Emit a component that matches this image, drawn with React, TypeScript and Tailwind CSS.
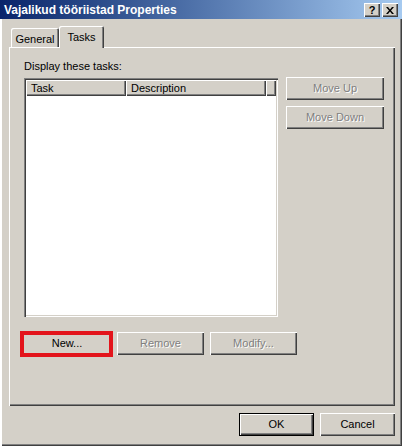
import React from 'react';

const raised =
    'shadow-[inset_1px_1px_0_#ffffff,inset_-1px_-1px_0_#404040,inset_-2px_-2px_0_#808080]';

function Btn({
    label,
    disabled = false,
    isDefault = false,
    className = '',
}: {
    label: string;
    disabled?: boolean;
    isDefault?: boolean;
    className?: string;
}) {
    const edge = isDefault
        ? 'shadow-[inset_0_0_0_1px_#000000,inset_2px_2px_0_#ffffff,inset_-2px_-2px_0_#404040,inset_-3px_-3px_0_#808080]'
        : raised;
    return (
        <div
            className={`flex h-[23px] items-center justify-center bg-[#d4d0c8] text-[11px] ${edge} ${
                disabled ? 'text-[#808080] [text-shadow:1px_1px_0_#ffffff]' : 'text-black'
            } ${className}`}
        >
            {label}
        </div>
    );
}

function CaptionBtn({ children }: { children: React.ReactNode }) {
    return (
        <div
            className={`flex h-[14px] w-[16px] items-center justify-center bg-[#d4d0c8] text-[11px] font-bold leading-none text-black ${raised}`}
        >
            {children}
        </div>
    );
}

export default function App() {
    return (
        <div
            className="relative flex h-[446px] w-[402px] flex-col bg-[#d4d0c8] shadow-[inset_2px_0_0_#ffffff,inset_-1px_-1px_0_#404040,inset_-2px_-2px_0_#808080]"
            style={{ fontFamily: '"Liberation Sans", Arial, sans-serif' }}
        >
            {/* title bar */}
            <div className="flex h-[19px] items-center bg-gradient-to-r from-[#0a246a] to-[#a6caf0] px-[4px]">
                <span className="flex-1 text-[12px] font-bold text-white">Vajalikud tööriistad Properties</span>
                <div className="flex gap-[2px] pt-px">
                    <CaptionBtn>?</CaptionBtn>
                    <CaptionBtn>
                        <svg width="8" height="7" viewBox="0 0 8 7">
                            <path d="M0 0h2l2 2.5L6 0h2L5 3.5 8 7H6L4 4.5 2 7H0l3-3.5z" fill="#000" />
                        </svg>
                    </CaptionBtn>
                </div>
            </div>

            {/* tabs */}
            <div className="mt-[7px] flex h-[21px] items-end pl-[11px]">
                <div className="flex h-[19px] w-[48px] items-center justify-center rounded-t-[2px] text-[11px] shadow-[inset_1px_1px_0_#ffffff,inset_-1px_0_0_#404040,inset_-2px_0_0_#808080]">
                    <span className="pt-[3px]">General</span>
                </div>
                <div className="relative z-10 -mb-px flex h-[22px] w-[45px] items-start justify-center rounded-t-[2px] bg-[#d4d0c8] pt-[3px] text-[11px] shadow-[inset_1px_1px_0_#ffffff,inset_-1px_0_0_#404040,inset_-2px_0_0_#808080]">
                    Tasks
                </div>
            </div>

            {/* panel */}
            <div className="ml-[9px] flex h-[359px] w-[386px] flex-col pl-[15px] pt-[13px] shadow-[inset_1px_1px_0_#ffffff,inset_-1px_-1px_0_#404040,inset_-2px_-2px_0_#808080]">
                <div className="h-[18px] text-[11px] leading-[13px]">Display these tasks:</div>
                <div className="flex gap-[8px]">
                    <div className="flex h-[239px] w-[254px] flex-col bg-white p-[2px] shadow-[inset_1px_1px_0_#808080,inset_2px_2px_0_#404040,inset_-1px_-1px_0_#ffffff,inset_-2px_-2px_0_#d4d0c8]">
                        <div className="flex h-[16px] text-[11px]">
                            <div className={`flex w-[100px] items-center bg-[#d4d0c8] pl-[5px] ${raised}`}>Task</div>
                            <div className={`flex w-[140px] items-center bg-[#d4d0c8] pl-[5px] ${raised}`}>Description</div>
                            <div className={`flex-1 bg-[#d4d0c8] ${raised}`} />
                        </div>
                    </div>
                    <div className="-mt-px flex flex-col gap-[6px]">
                        <Btn label="Move Up" disabled className="w-[98px]" />
                        <Btn label="Move Down" disabled className="w-[98px]" />
                    </div>
                </div>
                <div className="mt-[15px] flex gap-[6px]">
                    <Btn label="New..." className="-ml-[1px] w-[88px]" />
                    <Btn label="Remove" disabled className="w-[87px]" />
                    <Btn label="Modify..." disabled className="w-[87px]" />
                </div>
            </div>

            {/* dialog buttons */}
            <div className="mt-[7px] flex justify-end gap-[6px] pr-[7px]">
                <Btn label="OK" isDefault className="w-[75px]" />
                <Btn label="Cancel" className="w-[75px]" />
            </div>

            {/* red highlight */}
            <div className="absolute left-[20px] top-[331px] h-[26px] w-[93px] border-[4px] border-[#e3141b]" />
        </div>
    );
}
